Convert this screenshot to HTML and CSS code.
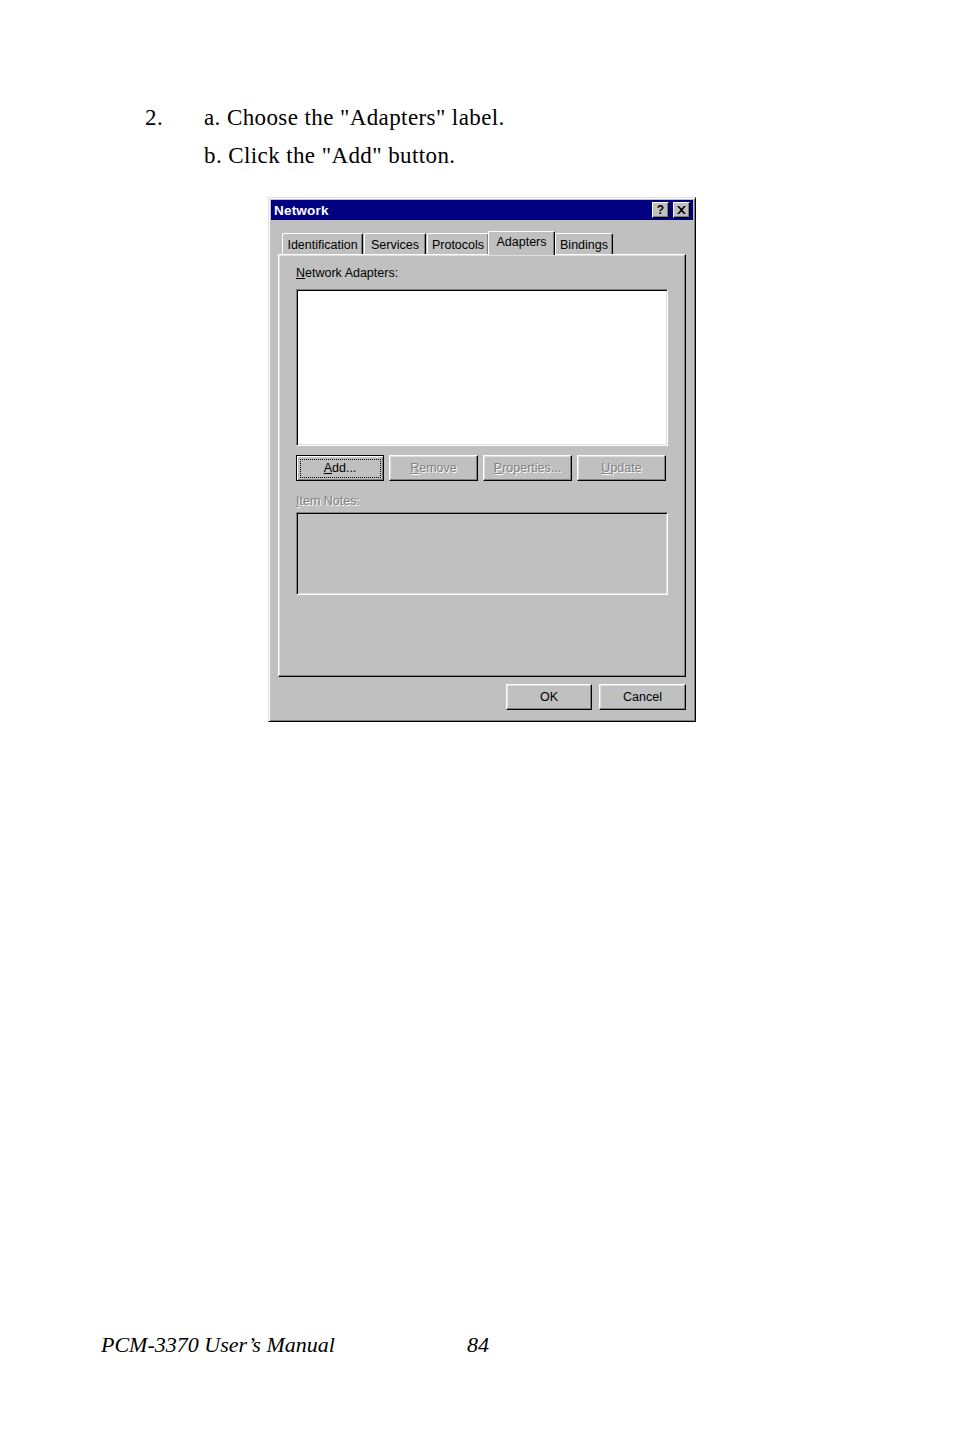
FILE: index.html
```html
<!DOCTYPE html>
<html>
<head>
<meta charset="utf-8">
<link rel="stylesheet" href="styles.css">
</head>
<body>
<div class="page">
  <div class="step">
    <div class="num">2.</div>
    <div class="lines">
      <div>a. Choose the "Adapters" label.</div>
      <div>b. Click the "Add" button.</div>
    </div>
  </div>

  <div class="window">
    <div class="titlebar">
      <span class="title">Network</span>
      <div class="tbtns">
        <span class="tbtn help">?</span>
        <span class="tbtn close"><svg width="9" height="8" viewBox="0 0 9 8"><path d="M0 0h2l2.5 2.5L7 0h2L5.5 4 9 8H7L4.5 5.5 2 8H0l3.5-4z" fill="#000"/></svg></span>
      </div>
    </div>
    <div class="tabs">
      <span class="tab t1">Identification</span>
      <span class="tab t2">Services</span>
      <span class="tab t3">Protocols</span>
      <span class="tab sel">Adapters</span>
      <span class="tab t5">Bindings</span>
    </div>
    <div class="panel">
      <div class="label"><u>N</u>etwork Adapters:</div>
      <div class="listbox"></div>
      <div class="btnrow">
        <span class="btn default"><span class="focus"><u>A</u>dd...</span></span>
        <span class="btn disabled"><u>R</u>emove</span>
        <span class="btn disabled"><u>P</u>roperties...</span>
        <span class="btn disabled"><u>U</u>pdate</span>
      </div>
      <div class="label notes-label disabled-text"><u>I</u>tem Notes:</div>
      <div class="notes"></div>
    </div>
    <div class="footer-btns">
      <span class="btn okbtn">OK</span>
      <span class="btn cancelbtn">Cancel</span>
    </div>
  </div>

  <div class="pagefoot">
    <span class="manual">PCM-3370 User’s Manual</span>
    <span class="pnum">84</span>
  </div>
</div>
</body>
</html>
```

FILE: styles.css
```css
html, body {
  margin: 0;
  padding: 0;
  background: #fff;
}

.page {
  width: 954px;
  height: 1434px;
  font-family: "Liberation Serif", "Times New Roman", serif;
  color: #000;
}

.step {
  display: flex;
  padding: 99px 0 0 145px;
  font-size: 23px;
  letter-spacing: 0.4px;
  line-height: 38px;
}

.step .num {
  width: 59px;
}

.window {
  margin: 22px 0 0 268px;
  width: 428px;
  height: 525px;
  box-sizing: border-box;
  background: #c0c0c0;
  border: 1px solid;
  border-color: #dfdfdf #000 #000 #dfdfdf;
  box-shadow: inset 1px 1px #fff, inset -1px -1px #808080;
  padding: 2px;
  font-family: "Liberation Sans", Arial, sans-serif;
  font-size: 12.5px;
  display: flex;
  flex-direction: column;
}

.titlebar {
  height: 20px;
  background: #000080;
  display: flex;
  align-items: center;
  justify-content: space-between;
  padding: 0 3px 0 3px;
}

.title {
  color: #fff;
  font-weight: bold;
  font-size: 13.5px;
  letter-spacing: 0.2px;
}

.tbtns {
  display: flex;
  gap: 4px;
}

.tbtn {
  width: 17px;
  height: 16px;
  box-sizing: border-box;
  background: #c0c0c0;
  border: 1px solid;
  border-color: #fff #000 #000 #fff;
  box-shadow: inset -1px -1px #808080;
  display: flex;
  align-items: center;
  justify-content: center;
  font-weight: bold;
  font-size: 12px;
  line-height: 1;
  color: #000;
}

.tabs {
  display: flex;
  align-items: flex-end;
  margin: 11px 0 0 11px;
  height: 23px;
  position: relative;
  z-index: 1;
}

.tab {
  height: 21px;
  box-sizing: border-box;
  display: flex;
  align-items: center;
  justify-content: center;
  padding-top: 1px;
  border-top: 1px solid #fff;
  border-left: 1px solid #fff;
  border-right: 1px solid #000;
  box-shadow: inset -1px 0 #808080;
  border-radius: 2px 2px 0 0;
  margin-right: 1px;
  color: #000;
  white-space: nowrap;
}

.t1 { width: 81px; }
.t2 { width: 62px; }
.t3 { width: 62px; }
.t5 { width: 58px; }

.tab.sel {
  width: 67px;
  height: 24px;
  margin: 0 0 -1px -2px;
  padding: 0 0 3px 0;
  background: #c0c0c0;
  position: relative;
}

.panel {
  margin: 0 7px;
  height: 423px;
  box-sizing: border-box;
  border: 1px solid;
  border-color: #fff #000 #000 #fff;
  box-shadow: inset -1px -1px #808080, inset 1px 1px #dfdfdf;
  padding: 11px 17px 0 17px;
}

.label {
  line-height: 14px;
  height: 14px;
  color: #000;
}

.listbox {
  margin-top: 9px;
  height: 157px;
  box-sizing: border-box;
  background: #fff;
  border: 1px solid;
  border-color: #808080 #fff #fff #808080;
  box-shadow: inset 1px 1px #000, inset -1px -1px #dfdfdf;
}

.btnrow {
  margin-top: 9px;
  display: grid;
  grid-template-columns: 88px 89px 89px 89px;
  gap: 5px;
}

.btn {
  height: 26px;
  box-sizing: border-box;
  background: #c0c0c0;
  border: 1px solid;
  border-color: #fff #000 #000 #fff;
  box-shadow: inset -1px -1px #808080, inset 1px 1px #dfdfdf;
  display: flex;
  align-items: center;
  justify-content: center;
  color: #000;
}

.btn.default {
  border: 1px solid #000;
  box-shadow: inset 1px 1px #fff, inset -1px -1px #808080;
}

.focus {
  border: 1px dotted #000;
  width: 81px;
  box-sizing: border-box;
  height: 19px;
  display: flex;
  align-items: center;
  justify-content: center;
}

.btn.disabled,
.disabled-text {
  color: #808080;
  text-shadow: 1px 1px #fff;
}

.notes-label {
  margin-top: 13px;
}

.notes {
  margin-top: 4px;
  height: 83px;
  box-sizing: border-box;
  border: 1px solid;
  border-color: #808080 #fff #fff #808080;
  box-shadow: inset 1px 1px #000, inset -1px -1px #dfdfdf;
}

.footer-btns {
  margin: 7px 7px 0 0;
  display: flex;
  justify-content: flex-end;
  gap: 7px;
}

.okbtn {
  width: 86px;
}

.cancelbtn {
  width: 87px;
}

.pagefoot {
  margin-top: 611px;
  padding-left: 101px;
  display: flex;
  font-style: italic;
  font-size: 22px;
  line-height: 24px;
}

.manual {
  width: 366px;
}
```
